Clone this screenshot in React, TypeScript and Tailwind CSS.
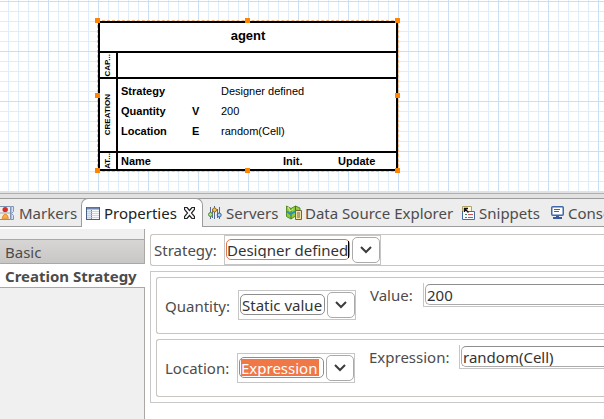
import type { ReactNode } from "react";

const handles = [
  "-left-[5px] -top-[5px]",
  "left-[145px] -top-[5px]",
  "-right-[4px] -top-[5px]",
  "-left-[5px] top-[70px]",
  "-right-[4px] top-[70px]",
  "-left-[5px] -bottom-[4px]",
  "left-[145px] -bottom-[4px]",
  "-right-[4px] -bottom-[4px]",
];

function SideLabel({ children }: { children: ReactNode }) {
  return (
    <div className="flex w-[18px] shrink-0 items-center justify-center overflow-hidden border-r-2 border-black">
      <span className="rotate-180 text-[8px] leading-[10px] font-bold whitespace-nowrap [writing-mode:vertical-rl]">{children}</span>
    </div>
  );
}

const creation = [
  ["Strategy", "", "Designer defined"],
  ["Quantity", "V", "200"],
  ["Location", "E", "random(Cell)"],
];

function AgentNode() {
  return (
    <div className="absolute top-[21px] left-[98px] w-[300px] border-2 border-black bg-white font-['Liberation_Sans',Arial,sans-serif] text-[11px] text-black">
      <div className="pointer-events-none absolute -inset-[3px] border border-dashed border-[#f9b877]" />
      <h1 className="h-[28px] text-center text-[13px] leading-[25px] font-bold">agent</h1>
      <div className="flex h-[26px] border-t-2 border-black">
        <SideLabel>CAP...</SideLabel>
      </div>
      <div className="flex h-[74px] border-t-2 border-black">
        <SideLabel>CREATION</SideLabel>
        <dl className="pt-[2px] pl-[3px] leading-[20px]">
          {creation.map(([name, kind, value]) => (
            <div key={name} className="flex">
              <dt className="w-[71px] font-bold">{name}</dt>
              <dd className="w-[29px] font-bold">{kind}</dd>
              <dd>{value}</dd>
            </div>
          ))}
        </dl>
      </div>
      <div className="flex h-[18px] border-t-2 border-black">
        <SideLabel>AT...</SideLabel>
        <div className="flex pl-[3px] leading-4 font-bold">
          <span className="w-[162px]">Name</span>
          <span className="w-[55px]">Init.</span>
          <span>Update</span>
        </div>
      </div>
      {handles.map((place) => (
        <span key={place} className={`absolute size-[5px] bg-[#ff8400] ${place}`} />
      ))}
    </div>
  );
}

function MarkersIcon() {
  return (
    <svg width="14" height="16" viewBox="0 0 14 16" className="shrink-0">
      <path d="M0 1.5h10.5v13H0" fill="#f4efe6" stroke="#7d91b4" />
      <path d="M11 1.5h2.5v5l-2 2 2 2v4H11z" fill="#d7e3f3" stroke="#8196b8" />
      <circle cx="5.2" cy="4.6" r="2.7" fill="#d92a2e" />
      <path d="M0 8h10" stroke="#9daac0" />
      <path d="M2 13.3c.8-.6.8-4 3.3-4s2.5 3.4 3.3 4z" fill="#ffb13b" stroke="#dc7a1c" strokeWidth=".8" />
    </svg>
  );
}

function PropertiesIcon() {
  return (
    <svg width="14" height="13" viewBox="0 0 14 13" className="shrink-0">
      <rect x=".5" y=".5" width="13" height="12" fill="#f8fafd" stroke="#476087" />
      <path d="M1 1.5h12" stroke="#6c86ad" strokeWidth="2" />
      <path d="M1 3h4v9H1z" fill="#dfe7f3" />
      <path d="M5.5 3v9" stroke="#7088ab" />
      <path d="M1 4.5h12M1 6.5h12M1 8.5h12M1 10.5h12" stroke="#b6c5db" strokeWidth=".7" />
    </svg>
  );
}

function CloseIcon() {
  return (
    <svg width="11" height="12" viewBox="0 0 11 12">
      <path d="M.5.5H3L5.5 3.5 8 .5h2.5v2L7.5 6l3 3.5v2H8L5.500 8.500 3 11.500H.5v-2l3-3.500-3-3.500z" fill="#fff" stroke="#222" strokeWidth="1.2" />
    </svg>
  );
}

function ServersIcon() {
  return (
    <svg width="14" height="14" viewBox="0 0 14 14" className="shrink-0">
      <path d="M2.5 1v12M6.5 0v13M11.5 1v12M4.5 3v9M9.5 3v9" stroke="#536a94" />
      <circle cx="2.5" cy="8.5" r="2" fill="#b8dd8d" stroke="#4f8a36" />
      <circle cx="6.5" cy="4" r="2" fill="#f1c451" stroke="#9c6c1a" />
      <circle cx="11.2" cy="9" r="2" fill="#acd3f4" stroke="#315f9f" />
    </svg>
  );
}

function DataSourceIcon() {
  return (
    <svg width="16" height="15" viewBox="0 0 16 15" className="shrink-0">
      <path d="M.5 1 5 3.5 9.5 1 14 3v10l-4.5-2L5 14 .5 11.5z" fill="#8fce3b" stroke="#578d2c" />
      <path d="M5 3.5V14M9.5 1v10" stroke="#447522" />
      <path d="M1 6.5 4.5 9 9 6.5l4 1" fill="none" stroke="#318cc0" strokeWidth="2" />
      <path d="m2 2 2 4 3-2" fill="none" stroke="#d7f282" />
      <path d="M9.5 5.5h6v9h-6z" fill="#f1e2a1" stroke="#746440" />
      <path d="M11 8h3M11 10h3M11 12h3" stroke="#746440" />
    </svg>
  );
}

function SnippetsIcon() {
  return (
    <svg width="13" height="14" viewBox="0 0 13 14" className="shrink-0">
      <path d="M.5 13V.5h9V5" fill="#fff9dc" stroke="#b2a365" />
      <path d="M.5 5v8.5h12v-8H5" fill="#f8fbff" stroke="#456c9e" />
      <path d="M2.5 6V2.5H6M3 3l3.5 3.5" fill="none" stroke="#111" strokeWidth="1.4" />
      <path d="M3 8.5h2M3 11.5h2" stroke="#378957" />
      <path d="M6 8.5h5M6 11.5h5" stroke="#cc5252" />
    </svg>
  );
}

function ConsoleIcon() {
  return (
    <svg width="13" height="13" viewBox="0 0 13 13" className="shrink-0">
      <rect x=".75" y=".75" width="11.5" height="8.5" rx="1" fill="#fff" stroke="#3e68aa" strokeWidth="1.5" />
      <path d="M3 3.5h6M3 5.5h5" stroke="#48638c" />
      <path d="M5 10h3v1h3v2H2v-2h3z" fill="#375b9c" />
    </svg>
  );
}

function Tab({ icon, label, className }: { icon: ReactNode; label: string; className: string }) {
  return (
    <button role="tab" className={`flex shrink-0 items-center whitespace-nowrap ${className}`}>
      {icon}
      <span>{label}</span>
    </button>
  );
}

function Combo({ id, value, field, input, caret }: { id: string; value: string; field: string; input: string; caret?: boolean }) {
  return (
    <div className="flex h-[30px] shrink-0 gap-[2px] border border-[#c6c6c6] p-px pr-0">
      <div className={`mt-[2px] flex h-[21px] items-center rounded-[5px] border ${field}`}>
        <input id={id} defaultValue={value} className={`h-[17px] min-w-0 outline-none ${input}`} />
        {caret && <span className="h-[17px] w-px bg-black" />}
      </div>
      <button aria-label={`Open ${id} list`} className="flex h-[26px] w-[28px] items-center justify-center rounded-[5px] border border-[#aaa] bg-white">
        <svg width="12" height="8" viewBox="0 0 12 8">
          <path d="m1 1 5 5 5-5" fill="none" stroke="#3c3c3c" strokeWidth="2" />
        </svg>
      </button>
    </div>
  );
}

function ValueField({ id, label, value, className }: { id: string; label: string; value: string; className: string }) {
  return (
    <div className="mt-[5px] flex min-w-0 flex-1 items-start">
      <label htmlFor={id} className={`shrink-0 leading-[24px] ${className}`}>{label}</label>
      <div className="min-w-0 flex-1 border-b border-l border-[#c6c6c6] pt-px pb-px pl-px">
        <input id={id} defaultValue={value} className="block h-[21px] w-full rounded-l-[5px] border border-r-0 border-[#aaa] border-t-[#8e8e8e] pl-px text-[#333] outline-none" />
      </div>
    </div>
  );
}

export default function App() {
  return (
    <main className="flex h-screen flex-col overflow-hidden bg-white font-['Noto_Sans','Open_Sans',sans-serif] text-[15px] leading-[20px] text-[#4c4c4c]">
      <section className="relative h-[191px] shrink-0 overflow-hidden bg-white">
        <div className="absolute inset-0 bg-[linear-gradient(90deg,#c9dff5_1px,transparent_1px),linear-gradient(#c9dff5_1px,transparent_1px),linear-gradient(90deg,#dfecfa_1px,transparent_1px),linear-gradient(#dfecfa_1px,transparent_1px)] bg-size-[50px_50px,50px_50px,10px_10px,10px_10px] bg-position-[48px_1px,48px_1px,8px_1px,8px_1px]" />
        <AgentNode />
      </section>
      <div className="h-[7px] shrink-0 border-t-2 border-[#e2e2e2] bg-[#e2e2e2]">
        <div className="h-px bg-[#b0b0b0]" />
      </div>

      <div role="tablist" className="flex h-[29px] shrink-0 border-y border-[#9c9c9c] bg-[#ededed]">
        <Tab icon={<MarkersIcon />} label="Markers" className="w-[81px] gap-[5px]" />
        <div className="-my-px flex w-[122px] shrink-0 items-center rounded-t-[7px] border border-b-0 border-[#9c9c9c] bg-white pl-1 text-[#222]">
          <button role="tab" aria-selected="true" className="flex w-[98px] items-center gap-1">
            <PropertiesIcon />
            Properties
          </button>
          <button aria-label="Close Properties">
            <CloseIcon />
          </button>
        </div>
        <Tab icon={<ServersIcon />} label="Servers" className="w-[83px] gap-1 pl-[5px]" />
        <Tab icon={<DataSourceIcon />} label="Data Source Explorer" className="w-[176px] gap-[3px]" />
        <Tab icon={<SnippetsIcon />} label="Snippets" className="w-[89px] gap-1" />
        <Tab icon={<ConsoleIcon />} label="Console" className="gap-1" />
      </div>

      <div className="flex min-h-0 flex-1 pt-[2px]">
        <nav className="flex w-[145px] shrink-0 flex-col">
          <div className="h-[11px] border-r border-b border-[#aaa7a4] bg-[#f1f0f0]" />
          <button className="h-6 border-r border-b border-[#aaa7a4] bg-linear-to-b from-[#d8d6d5] to-[#c9c7c5] pl-[5px] text-left">Basic</button>
          <button className="h-6 border-b border-[#aaa7a4] bg-white pl-[5px] text-left font-bold whitespace-nowrap">Creation Strategy</button>
          <div className="flex-1 border-r border-[#aaa7a4] bg-[#f1f0f0]" />
        </nav>

        <form className="min-w-0 flex-1 pt-[5px] pl-[5px]">
          <div className="flex h-[32px] items-center rounded-l-[3px] border border-r-0 border-[#c8c4c1] pl-[3px]">
            <label htmlFor="strategy" className="w-[70px] shrink-0">Strategy:</label>
            <Combo id="strategy" value="Designer defined" caret field="w-[124px] border-[#e0764f]" input="w-[121px] text-[#333]" />
          </div>
          <div className="mt-[5px] border border-r-0 border-[#c8c8c8] py-[5px] pl-[5px]">
            <div className="flex h-[57px] rounded-l-[3px] border border-r-0 border-[#c8c4c1] pl-[8px]">
              <label htmlFor="quantity" className="w-[73px] shrink-0 leading-[56px]">Quantity:</label>
              <div className="flex w-[132px] shrink-0 items-start pt-3">
                <Combo id="quantity" value="Static value" field="w-[85px] border-[#8e8e8e] pl-px" input="w-[82px] text-[#333]" />
              </div>
              <ValueField id="value" label="Value:" value="200" className="w-[53px]" />
            </div>
            <div className="mt-[5px] flex h-[58px] rounded-l-[3px] border border-r-0 border-[#c8c4c1] pl-[8px]">
              <label htmlFor="location" className="w-[72px] shrink-0 leading-[56px]">Location:</label>
              <div className="flex w-[132px] shrink-0 items-start pt-[13px]">
                <Combo id="location" value="Expression" field="w-[85px] border-[#8e8e8e] pl-px" input="w-[78px] bg-[#f07746] text-white" />
              </div>
              <ValueField id="expression" label="Expression:" value="random(Cell)" className="w-[90px]" />
            </div>
          </div>
        </form>
      </div>
    </main>
  );
}
